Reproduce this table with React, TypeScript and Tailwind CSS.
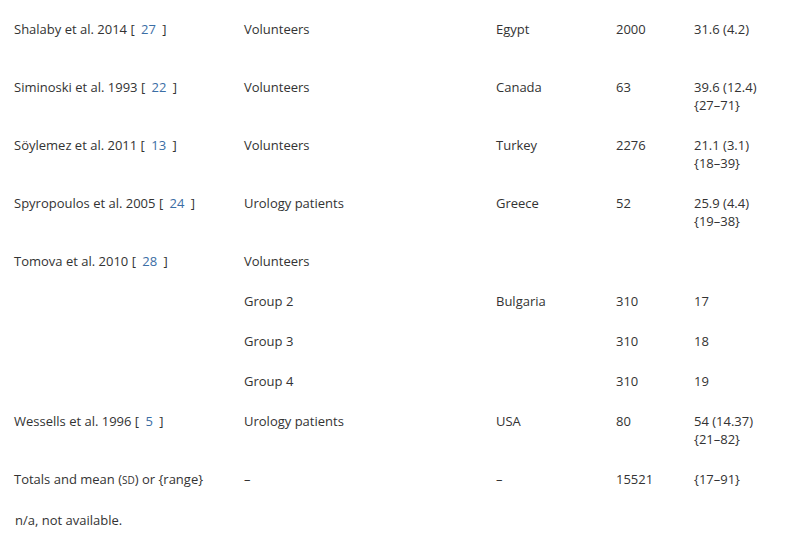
const rows: {
  study?: string;
  ref?: string;
  group: string;
  country?: string;
  n?: string;
  mean?: string;
  range?: string;
  tall?: boolean;
}[] = [
  { study: "Shalaby et al. 2014", ref: "27", group: "Volunteers", country: "Egypt", n: "2000", mean: "31.6 (4.2)", tall: true },
  { study: "Siminoski et al. 1993", ref: "22", group: "Volunteers", country: "Canada", n: "63", mean: "39.6 (12.4)", range: "{27–71}" },
  { study: "Söylemez et al. 2011", ref: "13", group: "Volunteers", country: "Turkey", n: "2276", mean: "21.1 (3.1)", range: "{18–39}" },
  { study: "Spyropoulos et al. 2005", ref: "24", group: "Urology patients", country: "Greece", n: "52", mean: "25.9 (4.4)", range: "{19–38}" },
  { study: "Tomova et al. 2010", ref: "28", group: "Volunteers" },
  { group: "Group 2", country: "Bulgaria", n: "310", mean: "17" },
  { group: "Group 3", n: "310", mean: "18" },
  { group: "Group 4", n: "310", mean: "19" },
  { study: "Wessells et al. 1996", ref: "5", group: "Urology patients", country: "USA", n: "80", mean: "54 (14.37)", range: "{21–82}" },
];

export default function App() {
  return (
    <div className="min-h-[551px] w-[785px] bg-white pt-[9px] font-['Open_Sans',sans-serif] text-[13px] leading-[18px] text-[#333]">
      <table className="table-fixed border-collapse">
        <colgroup>
          <col className="w-[230px]" />
          <col className="w-[252px]" />
          <col className="w-[120px]" />
          <col className="w-[78px]" />
          <col className="w-[105px]" />
        </colgroup>
        <tbody>
          {rows.map((r, i) => (
            <tr key={i}>
              <td className={`py-[11px] pl-[14px] align-top ${r.tall ? "h-[58px]" : ""}`}>
                {r.study && (
                  <>
                    {r.study} [ <a href="#" className="px-[3px] text-[#3b6ea5]">{r.ref}</a> ]
                  </>
                )}
              </td>
              <td className="py-[11px] pl-[14px] align-top">{r.group}</td>
              <td className="py-[11px] pl-[14px] align-top">{r.country}</td>
              <td className="py-[11px] pl-[14px] align-top">{r.n}</td>
              <td className="py-[11px] pl-[14px] align-top">
                {r.mean}
                {r.range && (
                  <>
                    <br />
                    {r.range}
                  </>
                )}
              </td>
            </tr>
          ))}
          <tr>
            <td className="py-[11px] pl-[14px] align-top">
              Totals and mean (<span className="text-[10px]">SD</span>) or {"{range}"}
            </td>
            <td className="py-[11px] pl-[14px] align-top">–</td>
            <td className="py-[11px] pl-[14px] align-top">–</td>
            <td className="py-[11px] pl-[14px] align-top">15521</td>
            <td className="py-[11px] pl-[14px] align-top">{"{17–91}"}</td>
          </tr>
        </tbody>
      </table>
      <p className="mt-[11px] pl-[15px]">n/a, not available.</p>
    </div>
  );
}
